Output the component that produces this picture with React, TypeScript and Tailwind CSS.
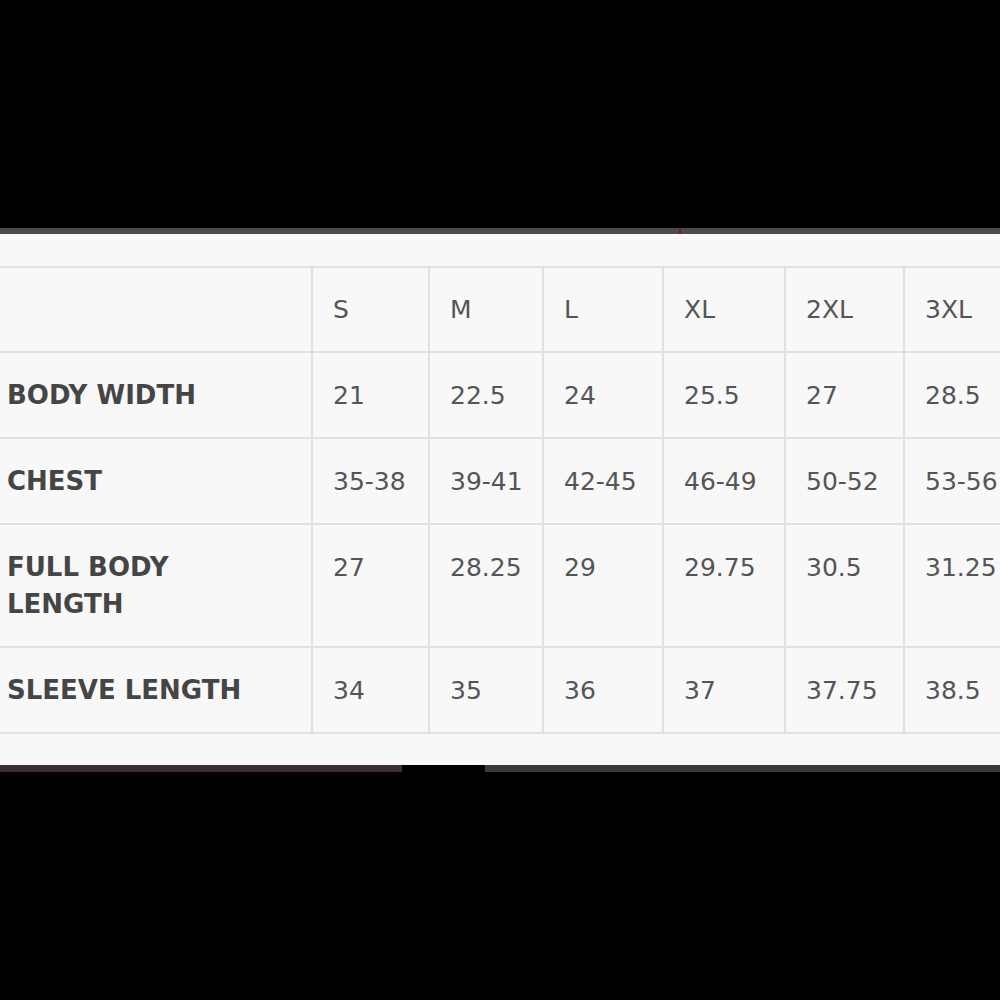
import React from "react";

const sizes = ["S", "M", "L", "XL", "2XL", "3XL"];

const rows: { label: string[]; values: string[] }[] = [
    { label: ["BODY WIDTH"], values: ["21", "22.5", "24", "25.5", "27", "28.5"] },
    { label: ["CHEST"], values: ["35-38", "39-41", "42-45", "46-49", "50-52", "53-56"] },
    { label: ["FULL BODY", "LENGTH"], values: ["27", "28.25", "29", "29.75", "30.5", "31.25"] },
    { label: ["SLEEVE LENGTH"], values: ["34", "35", "36", "37", "37.75", "38.5"] },
];

const colWidths = ["w-[312px]", "w-[117px]", "w-[114px]", "w-[120px]", "w-[122px]", "w-[119px]", "w-[120px]"];

function App() {
    return <div className="w-[1000px] h-[1000px] bg-black overflow-hidden flex flex-col" style={{ fontFamily: "'DejaVu Sans', sans-serif" }}>
        <div className="h-[228px] shrink-0" />
        <div className="h-[6px] shrink-0 bg-[#4b4b4b] flex">
            <div className="w-[679px]" />
            <div className="w-[2px] bg-[#7a1a1a]" />
        </div>
        <div className="bg-[#f8f8f8] pt-8 pb-[31px] overflow-hidden shrink-0">
            <table className="table-fixed border-collapse w-[1024px]">
                <colgroup>
                    {colWidths.map((w, i) => <col key={i} className={w} />)}
                </colgroup>
                <thead>
                    <tr className="border-y-2 border-[#e0e0e0]">
                        <th className="h-[85px] p-0" />
                        {sizes.map(s => (
                            <th key={s} className="border-l-2 border-[#e0e0e0] pl-5 text-left align-middle font-normal text-[25px] leading-[37px] text-[#555]">
                                {s}
                            </th>
                        ))}
                    </tr>
                </thead>
                <tbody>
                    {rows.map(r => (
                        <tr key={r.label.join(" ")} className="border-b-2 border-[#e0e0e0]">
                            <td className="pl-[7px] pt-6 pb-[23px] align-top font-bold text-[26px] leading-[37px] text-[#454545] whitespace-nowrap">
                                {r.label.map(l => <div key={l}>{l}</div>)}
                            </td>
                            {r.values.map((v, i) => (
                                <td key={i} className="border-l-2 border-[#e0e0e0] pl-5 pt-6 pb-[23px] align-top text-[25px] leading-[37px] text-[#555] whitespace-nowrap">
                                    {v}
                                </td>
                            ))}
                        </tr>
                    ))}
                </tbody>
            </table>
        </div>
        <div className="h-[7px] shrink-0 bg-[#333] flex">
            <div className="w-[402px] bg-[#3a3030]" />
            <div className="w-[83px] bg-black" />
            <div className="flex-1 bg-[#3a3a3a]" />
        </div>
    </div>
}

export default App;
